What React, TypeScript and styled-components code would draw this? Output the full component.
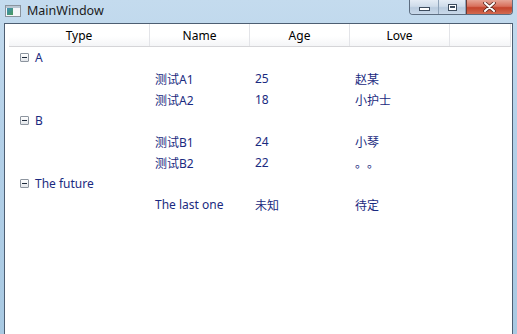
import styled, { createGlobalStyle } from 'styled-components'

const GlobalStyle = createGlobalStyle`
    html, body {
        margin: 0;
        padding: 0;
        overflow: hidden;
        background: #fff;
    }
`

const uiFont = `"Noto Sans", "Open Sans", "Noto Sans CJK SC", sans-serif`
const cjkFont = `"Noto Sans CJK SC", "Noto Sans", sans-serif`

const Window = styled.div`
    width: 517px;
    height: 340px;
    display: flex;
    flex-direction: column;
    background: linear-gradient(180deg, #c4dbee 0%, #b3d0e8 40%, #a8c9e2 100%);
    font-family: ${uiFont};
    font-size: 12px;
`

const TitleBar = styled.div`
    height: 23px;
    display: flex;
    align-items: flex-start;
    flex-shrink: 0;
`

const AppIcon = styled.svg`
    margin: 5px 0 0 5px;
    flex-shrink: 0;
`

const Title = styled.span`
    margin: 3px 0 0 6px;
    color: #1b1b1b;
    font-size: 12.5px;
    line-height: 16px;
`

const Controls = styled.div`
    margin-left: auto;
    margin-right: 4px;
    display: flex;
    height: 14px;
    border: 1px solid #5d6d80;
    border-top: none;
    border-radius: 0 0 4px 4px;
    overflow: hidden;
`

const CaptionButton = styled.div<{ $w: number; $close?: boolean }>`
    width: ${p => p.$w}px;
    height: 100%;
    display: flex;
    align-items: center;
    justify-content: center;
    border-left: ${p => (p.$close ? '1px solid #6b3a34' : 'none')};
    border-right: ${p => (p.$close ? 'none' : '1px solid #8ea2b8')};
    background: ${p =>
        p.$close
            ? 'linear-gradient(180deg, #e6a596 0%, #d8705c 45%, #c4442c 55%, #d26a50 100%)'
            : 'linear-gradient(180deg, #e4ecf5 0%, #cfdcea 45%, #b9cbde 55%, #c9d9ea 100%)'};
`

const MinGlyph = styled.div`
    width: 9px;
    height: 2px;
    margin-top: 4px;
    background: #fff;
    border: 1px solid #3d4c5e;
`

const MaxGlyph = styled.div`
    width: 7px;
    height: 5px;
    border: 1px solid #3d4c5e;
    box-shadow: inset 0 0 0 1px #fff, inset 0 2px 0 1px #3d4c5e;
    background: #fff;
`

const Client = styled.div`
    flex: 1;
    margin: 0 4px;
    border: 1px solid #4d5e72;
    border-bottom: none;
    background: #fff;
    padding: 0 1px 0 4px;
`

const Columns = `141px 100px 100px 100px 1fr`

const HeaderRow = styled.div`
    display: grid;
    grid-template-columns: ${Columns};
    height: 22px;
    border-bottom: 1px solid #d5d5d8;
    background: linear-gradient(180deg, #ffffff 0%, #ffffff 55%, #f4f5f7 100%);
    border-right: 1px solid #e3e4e8;
`

const HeaderCell = styled.div<{ $last?: boolean }>`
    display: flex;
    align-items: center;
    justify-content: center;
    padding-top: 1px;
    color: #000;
    border-right: ${p => (p.$last ? 'none' : '1px solid #e3e4e8')};
`

const GroupRow = styled.div`
    height: 21px;
    display: flex;
    align-items: center;
    padding-left: 11px;
    gap: 6px;
    color: #1a2a80;
`

const ExpanderBox = styled.div`
    width: 7px;
    height: 7px;
    border: 1px solid #8d959f;
    border-radius: 1px;
    background: linear-gradient(180deg, #ffffff 0%, #e3e6ea 100%);
    display: flex;
    align-items: center;
    justify-content: center;
    &::after {
        content: '';
        width: 5px;
        height: 1px;
        background: #1e2a3a;
    }
`

const DataRow = styled.div`
    display: grid;
    grid-template-columns: ${Columns};
    height: 21px;
    align-items: center;
    color: #1a2a80;
`

const Cell = styled.div<{ $cjk?: boolean }>`
    padding-left: 5px;
    white-space: nowrap;
    font-family: ${p => (p.$cjk ? cjkFont : 'inherit')};
    text-spacing-trim: space-all;
    font-feature-settings: 'halt' 0, 'chws' 0;
`

type Person = { name: string; age: string; love: string }
type Group = { type: string; items: Person[] }

const groups: Group[] = [
    {
        type: 'A',
        items: [
            { name: '测试A1', age: '25', love: '赵某' },
            { name: '测试A2', age: '18', love: '小护士' },
        ],
    },
    {
        type: 'B',
        items: [
            { name: '测试B1', age: '24', love: '小琴' },
            { name: '测试B2', age: '22', love: '。。' },
        ],
    },
    {
        type: 'The future',
        items: [{ name: 'The last one', age: '未知', love: '待定' }],
    },
]

function App() {
    return (
        <>
            <GlobalStyle />
            <Window>
                <TitleBar>
                    <AppIcon width="16" height="12" viewBox="0 0 16 12">
                        <defs>
                            <linearGradient id="ic" x1="0" y1="0" x2="1" y2="1">
                                <stop offset="0" stopColor="#3d8fb8" />
                                <stop offset="1" stopColor="#4a9a5a" />
                            </linearGradient>
                        </defs>
                        <rect x="0.5" y="0.5" width="15" height="11" fill="#f4f6f8" stroke="#8a949e" />
                        <rect x="1" y="1" width="14" height="2" fill="#b9c6d2" />
                        <rect x="2" y="3" width="6" height="7" fill="url(#ic)" />
                    </AppIcon>
                    <Title>MainWindow</Title>
                    <Controls>
                        <CaptionButton $w={28}>
                            <MinGlyph />
                        </CaptionButton>
                        <CaptionButton $w={26}>
                            <MaxGlyph />
                        </CaptionButton>
                        <CaptionButton $w={45} $close>
                            <svg width="13" height="10" viewBox="0 0 13 10">
                                <path d="M2 1 L11 9 M11 1 L2 9" stroke="#5a2a22" strokeWidth="3.6" strokeLinecap="round" />
                                <path d="M2 1 L11 9 M11 1 L2 9" stroke="#fff" strokeWidth="2" strokeLinecap="round" />
                            </svg>
                        </CaptionButton>
                    </Controls>
                </TitleBar>
                <Client>
                    <HeaderRow>
                        <HeaderCell>Type</HeaderCell>
                        <HeaderCell>Name</HeaderCell>
                        <HeaderCell>Age</HeaderCell>
                        <HeaderCell>Love</HeaderCell>
                        <HeaderCell $last />
                    </HeaderRow>
                    {groups.map(g => (
                        <div key={g.type}>
                            <GroupRow>
                                <ExpanderBox />
                                <span>{g.type}</span>
                            </GroupRow>
                            {g.items.map(p => (
                                <DataRow key={p.name}>
                                    <Cell />
                                    <Cell>{p.name}</Cell>
                                    <Cell>{p.age}</Cell>
                                    <Cell $cjk>{p.love}</Cell>
                                </DataRow>
                            ))}
                        </div>
                    ))}
                </Client>
            </Window>
        </>
    )
}

export default App
